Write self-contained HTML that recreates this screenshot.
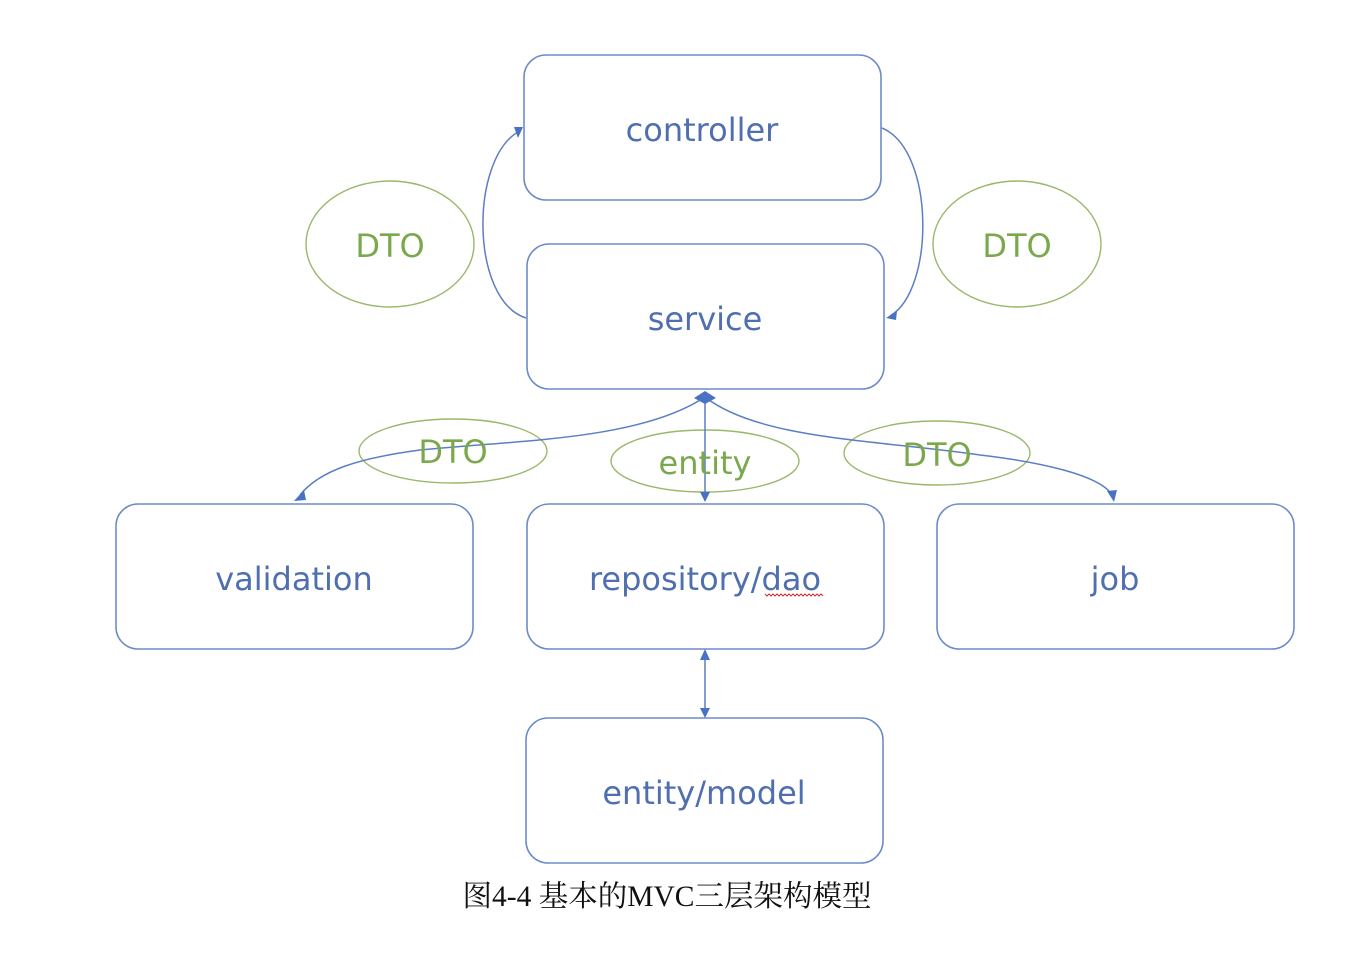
<!DOCTYPE html>
<html><head><meta charset="utf-8"><style>
body{margin:0;background:#fff;width:1362px;height:978px;overflow:hidden}
</style></head><body>
<svg width="1362" height="978" xmlns="http://www.w3.org/2000/svg" style="position:absolute;left:0;top:0">
<g fill="#fff" stroke="#6d8bc9" stroke-width="1.6">
<rect x="524" y="55" width="357" height="145" rx="22"/>
<rect x="527" y="244" width="357" height="145" rx="22"/>
<rect x="116" y="504" width="357" height="145" rx="22"/>
<rect x="527" y="504" width="357" height="145" rx="22"/>
<rect x="937" y="504" width="357" height="145" rx="22"/>
<rect x="526" y="718" width="357" height="145" rx="22"/>
</g>
<g fill="none" stroke="#9ab86a" stroke-width="1.4">
<ellipse cx="390" cy="244" rx="84" ry="63"/>
<ellipse cx="1017" cy="244" rx="84" ry="63"/>
<ellipse cx="453" cy="451" rx="94" ry="32"/>
<ellipse cx="705" cy="461" rx="94" ry="31"/>
<ellipse cx="937" cy="453" rx="93" ry="32"/>
</g>
<g fill="none" stroke="#5b7ec4" stroke-width="1.5">
<path d="M526 318 C470 300 470 160 518 132"/>
<path d="M882 128 C935 150 935 290 890 316"/>
<path d="M705 397 C640 440 520 440 420 450 C360 458 320 470 300 495"/>
<path d="M705 397 C760 440 880 440 980 455 C1040 462 1100 475 1112 495"/>
<path d="M705 400 L705 496"/>
<path d="M705 656 L705 712"/>
</g>
<g fill="#4a72c4">
<path d="M514 127 L523 127 L518 138 Z"/>
<path d="M886 318 L897 311 L896 320 Z"/>
<path d="M705 391 L716 398 L705 404 L694 398 Z"/>
<path d="M294 501 L304 490 L306 500 Z"/>
<path d="M1107 491 L1117 490 L1114 502 Z"/>
<path d="M700 492 L710 492 L705 502 Z"/>
<path d="M700 660 L710 660 L705 649 Z"/>
<path d="M700 708 L710 708 L705 718 Z"/>
</g>
<g font-family="DejaVu Sans, Liberation Sans, sans-serif" font-size="32" fill="#4f6fb0" text-anchor="middle">
<text x="702" y="141">controller</text>
<text x="705" y="330">service</text>
<text x="294" y="590">validation</text>
<text x="705" y="590">repository/dao</text>
<text x="1115" y="590">job</text>
<text x="704" y="804">entity/model</text>
</g>
<path d="M765 594 l2 2 l2 -2 l2 2 l2 -2 l2 2 l2 -2 l2 2 l2 -2 l2 2 l2 -2 l2 2 l2 -2 l2 2 l2 -2 l2 2 l2 -2 l2 2 l2 -2 l2 2 l2 -2 l2 2 l2 -2 l2 2 l2 -2 l2 2 l2 -2 l2 2 l2 -2 l2 2" fill="none" stroke="#d03030" stroke-width="1"/>
<g font-family="DejaVu Sans, Liberation Sans, sans-serif" font-size="32" fill="#7aa84c" text-anchor="middle">
<text x="390" y="257">DTO</text>
<text x="1017" y="257">DTO</text>
<text x="453" y="463">DTO</text>
<text x="705" y="474">entity</text>
<text x="937" y="466">DTO</text>
</g>
<text x="667" y="906" text-anchor="middle" font-family="Liberation Serif, Noto Serif CJK SC, serif" font-size="29.5" fill="#111">图4-4 基本的MVC三层架构模型</text>
</svg>
</body></html>
